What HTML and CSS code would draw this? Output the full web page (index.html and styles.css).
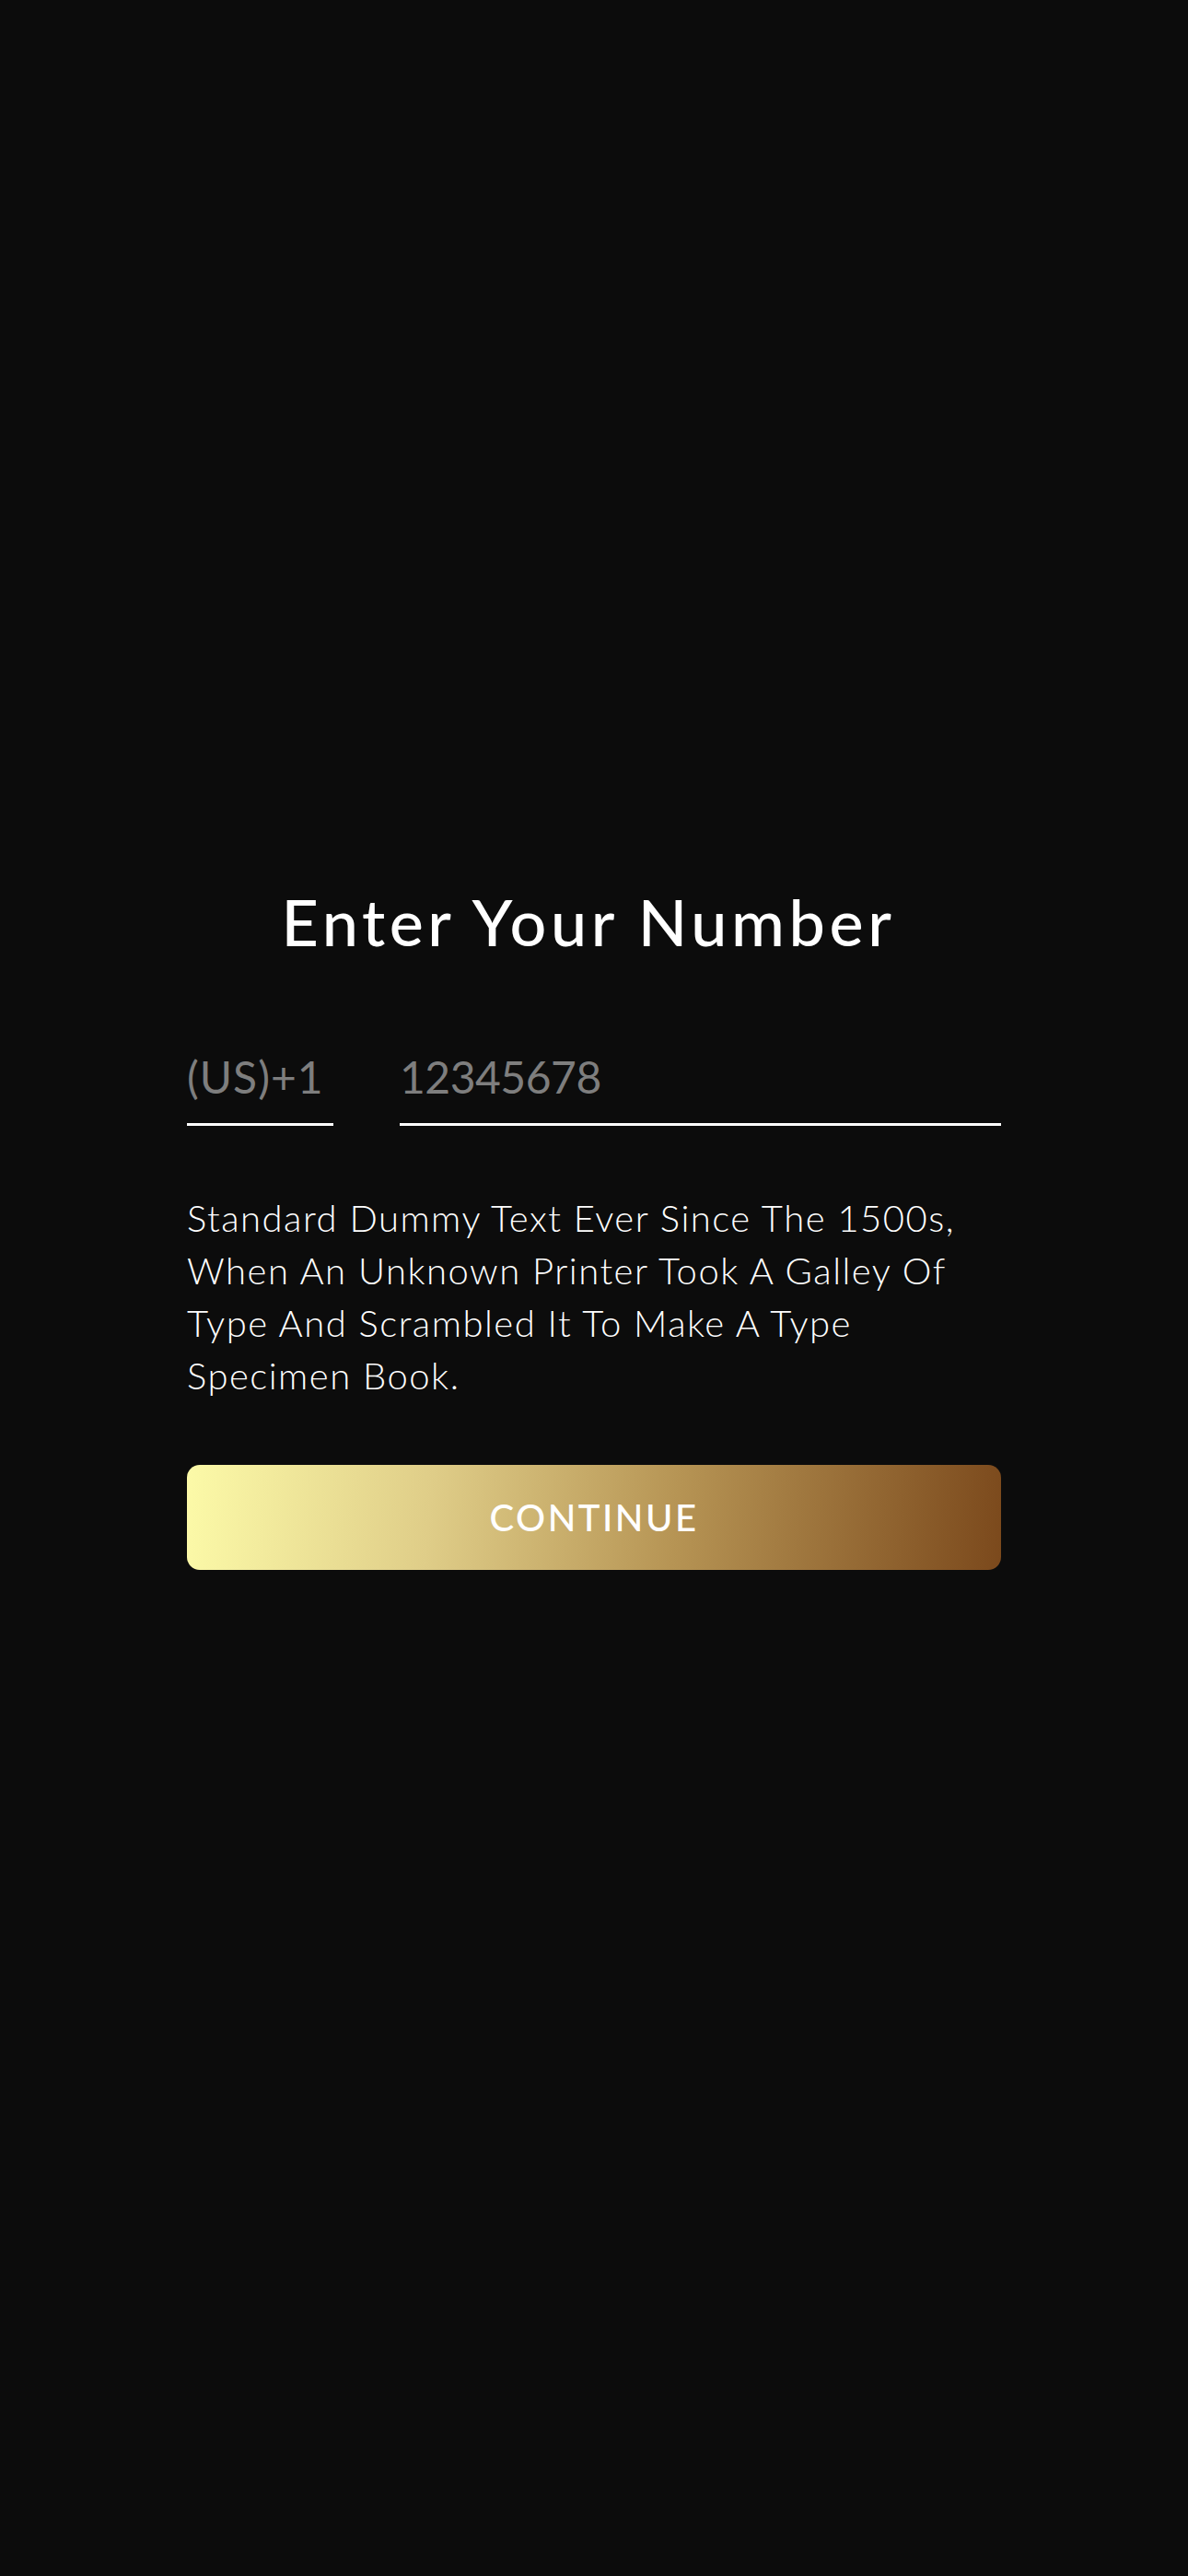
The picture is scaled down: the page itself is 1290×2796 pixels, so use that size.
FILE: index.html
```html
<!DOCTYPE html>
<html lang="en">
<head>
<meta charset="utf-8">
<title>Enter Your Number</title>
<link rel="stylesheet" href="styles.css">
</head>
<body>
<main class="screen">
  <section class="form">
    <h1 class="title">Enter Your Number</h1>
    <div class="phone-row">
      <div class="field field-code">(US)+1</div>
      <div class="field field-number">12345678</div>
    </div>
    <p class="note">Standard Dummy Text Ever Since The 1500s, When An Unknown Printer Took A Galley Of Type And Scrambled It To Make A Type Specimen Book.</p>
    <button class="continue" type="button">CONTINUE</button>
  </section>
</main>
</body>
</html>
```
FILE: styles.css
```css
html, body {
  margin: 0;
  padding: 0;
  background: #0c0c0c;
}
.screen {
  min-height: 2796px;
  display: flex;
  justify-content: center;
  font-family: "Lato", "Open Sans", sans-serif;
  color: #ffffff;
}
.form {
  width: 884px;
  padding-top: 958px;
  display: flex;
  flex-direction: column;
}
.title {
  margin: 0;
  padding-right: 12px;
  font-size: 70px;
  line-height: 84px;
  font-weight: 500;
  letter-spacing: 4.6px;
  text-align: center;
}
.phone-row {
  margin-top: 97px;
  display: flex;
  gap: 72px;
}
.field {
  font-size: 48px;
  line-height: 60px;
  padding-bottom: 20px;
  border-bottom: 3px solid #ffffff;
  color: #7e7e7e;
  font-weight: 400;
}
.field-code {
  width: 159px;
  letter-spacing: 1px;
}
.field-number {
  flex: 1;
  letter-spacing: -0.5px;
}
.note {
  margin: 72px 0 0;
  font-size: 40px;
  line-height: 57px;
  font-weight: 300;
  letter-spacing: 1.5px;
  padding-right: 30px;
}
.continue {
  margin-top: 68px;
  height: 114px;
  border: 0;
  border-radius: 14px;
  background: linear-gradient(95deg, #fcfaa8 0%, #dfcd88 30%, #b69454 60%, #7b491c 100%);
  color: #ffffff;
  font-family: "Lato", "Open Sans", sans-serif;
  font-size: 40px;
  font-weight: 500;
  letter-spacing: 2.5px;
  cursor: pointer;
}
```
